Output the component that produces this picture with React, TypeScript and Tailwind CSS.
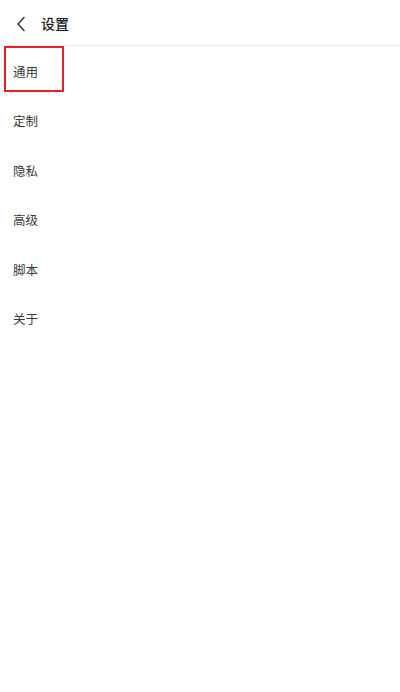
import React from "react";

const items = ["通用", "定制", "隐私", "高级", "脚本", "关于"];

export default function App() {
  return (
    <div
      className="w-[400px] h-[692px] bg-white flex flex-col"
      style={{ fontFamily: '"Noto Sans CJK SC", "Noto Sans", sans-serif' }}
    >
      <div className="h-[46px] flex items-center border-b border-[#ebebeb] shrink-0">
        <div className="w-[41px] flex items-center justify-center pt-[2px]">
          <svg width="10" height="16" viewBox="0 0 10 16" fill="none">
            <path d="M8 1.5 L2 8 L8 14.5" stroke="#333" strokeWidth="1.5" strokeLinecap="round" strokeLinejoin="round" />
          </svg>
        </div>
        <span className="text-[14px] font-medium text-[#222] leading-none">设置</span>
      </div>
      <div className="flex flex-col pt-[1px]">
        {items.map((t, i) => (
          <div key={t} className="h-[49.5px] flex items-center relative">
            <span className="pl-[13px] text-[12.5px] text-[#3a3a3a] leading-none">{t}</span>
            {i === 0 && (
              <div className="absolute left-[4px] top-[-1px] w-[60px] h-[46px] border-2 border-[#e8202a]" />
            )}
          </div>
        ))}
      </div>
    </div>
  );
}
